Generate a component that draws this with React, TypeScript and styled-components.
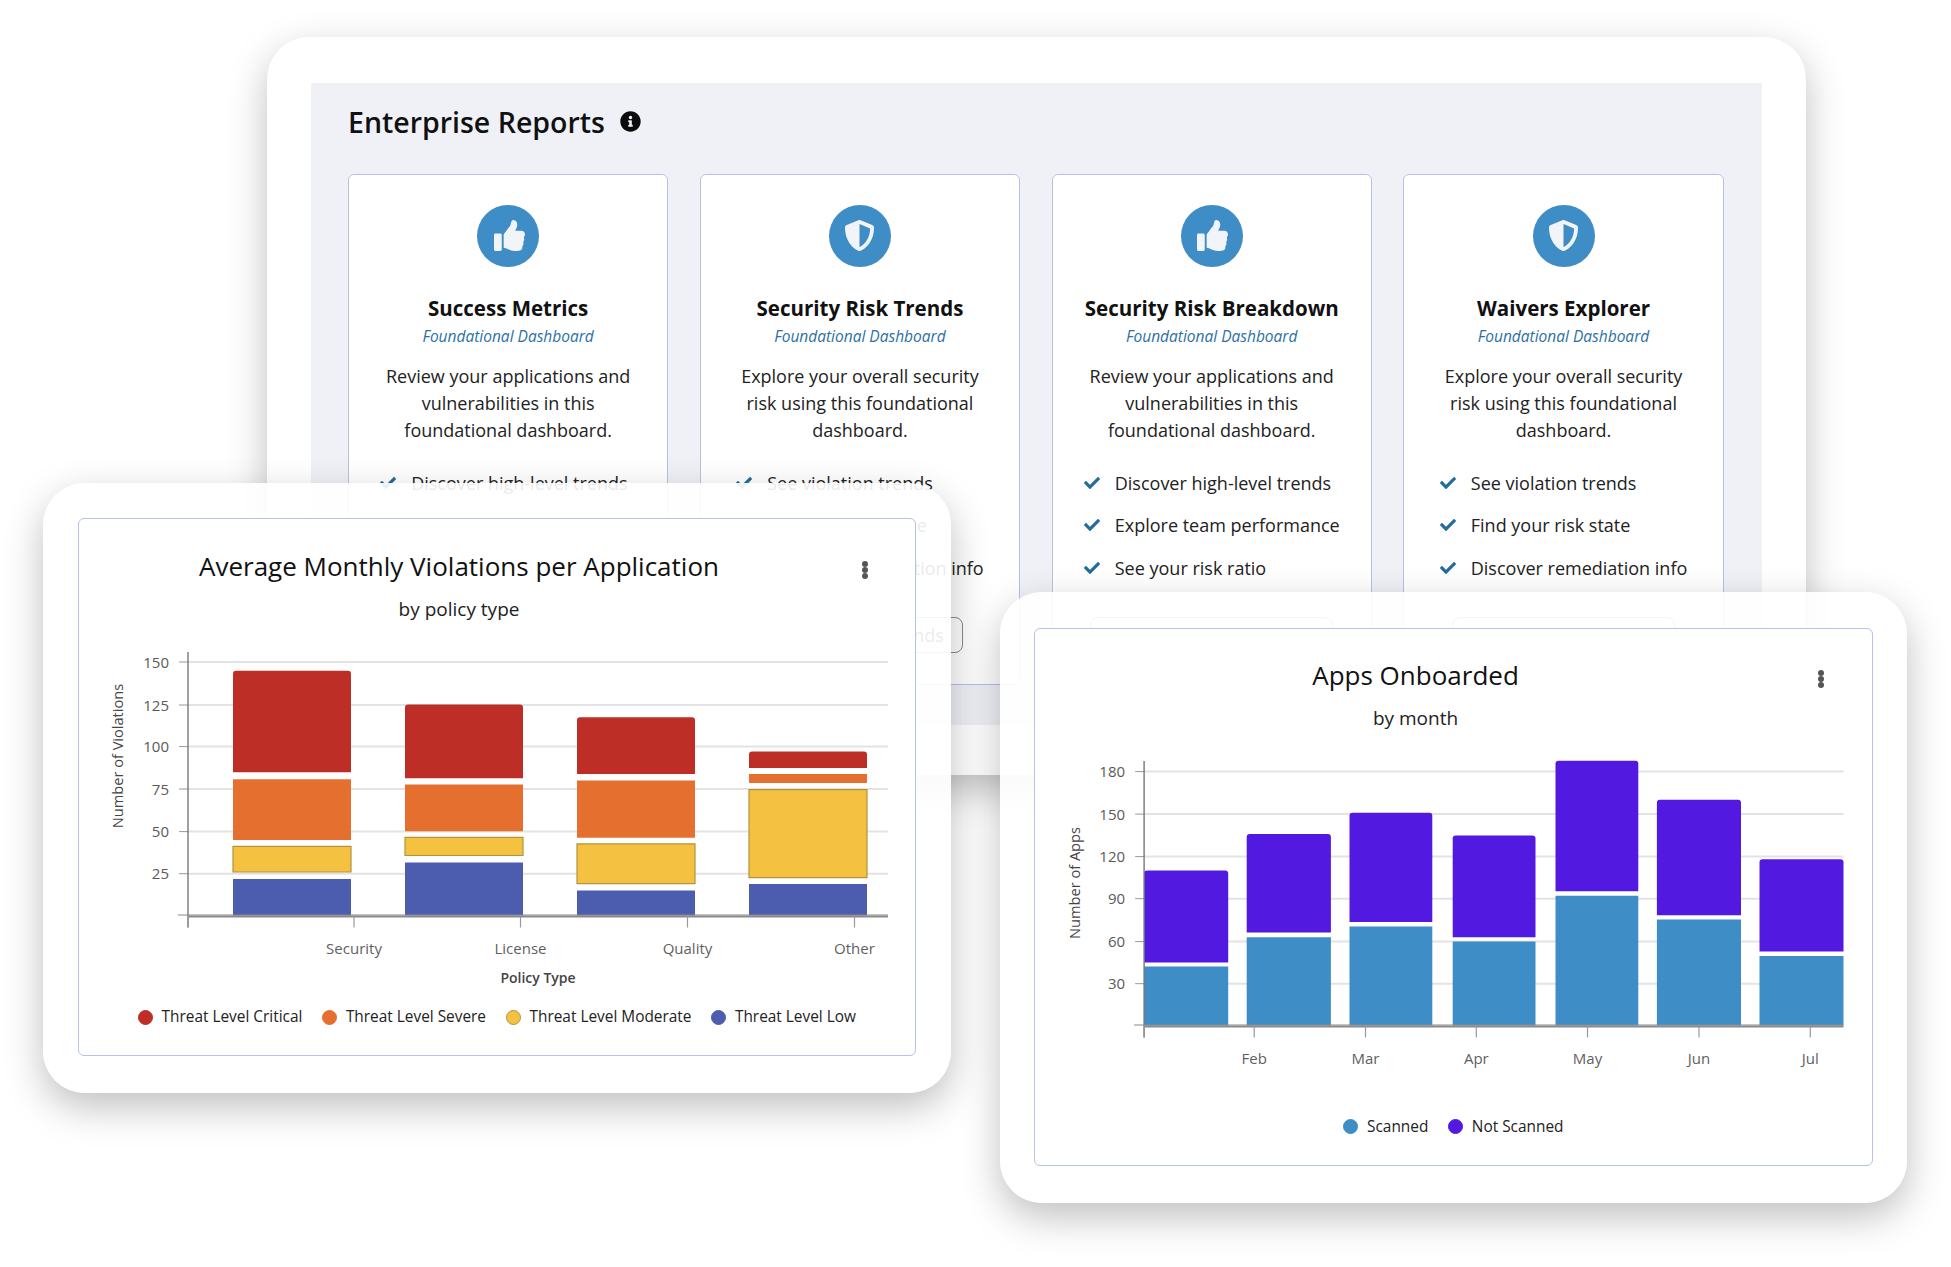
import React from 'react'
import styled, { createGlobalStyle } from 'styled-components'
import { FaShieldAlt, FaCheck, FaInfoCircle } from 'react-icons/fa'

const GlobalStyle = createGlobalStyle`
    html, body {
        margin: 0;
        background: #fff;
    }
    body {
        font-family: "Open Sans", "Liberation Sans", sans-serif;
        color: #1c1c1c;
    }
`

const Stage = styled.div`
    position: relative;
    width: 1951px;
    height: 1267px;
    padding: 37px 0 0 267px;
    box-sizing: border-box;
    overflow: hidden;
`
const Tablet = styled.div`
    width: 1539px;
    height: 738px;
    padding: 45.5px 44px 50px;
    box-sizing: border-box;
    background: #fff;
    border-radius: 42px;
    box-shadow: 0 14px 38px rgba(0, 0, 0, 0.25);
`
const Panel = styled.div`
    height: 100%;
    padding: 0 37px;
    box-sizing: border-box;
    background: #f0f1f7;
`
const PanelHeader = styled.div`
    display: flex;
    align-items: center;
    gap: 15.5px;
    height: 91px;
    padding-bottom: 13px;
    box-sizing: border-box;
`
const PanelTitle = styled.h1`
    margin: 0;
    font-size: 28.5px;
    font-weight: 600;
    color: #111;
`
const CardRow = styled.div`
    display: flex;
    gap: 31.5px;
`
const Card = styled.div`
    width: 320.3px;
    height: 511px;
    padding: 30px 30px 0;
    box-sizing: border-box;
    display: flex;
    flex-direction: column;
    align-items: center;
    background: #fff;
    border: 1.5px solid #b8c1e6;
    border-radius: 6px;
`
const IconCircle = styled.div`
    width: 62px;
    height: 62px;
    flex: none;
    display: flex;
    align-items: center;
    justify-content: center;
    border-radius: 50%;
    background: #3f8dc6;
    color: #f1f4f9;
    font-size: 31px;
`
const CardTitle = styled.h2`
    margin: 27.5px 0 0;
    font-size: 20.5px;
    line-height: 28px;
    font-weight: 700;
    color: #111;
    white-space: nowrap;
`
const CardKicker = styled.div`
    margin-top: 1.5px;
    font-size: 15.5px;
    line-height: 24px;
    font-style: italic;
    color: #2c70a6;
`
const CardText = styled.p`
    margin: 15px 0 0;
    font-size: 18px;
    line-height: 27px;
    text-align: center;
    color: #222;
`
const CheckList = styled.ul`
    margin: 27px 0 0;
    padding: 0;
    list-style: none;
    display: flex;
    flex-direction: column;
    gap: 17.3px;
    width: fit-content;
`
const CheckItem = styled.li`
    display: flex;
    align-items: center;
    gap: 15px;
    height: 25px;
    font-size: 18px;
    white-space: nowrap;
    color: #222;
    svg {
        width: 16px;
        height: 16px;
        color: #246c9e;
    }
`
const OutlineButton = styled.div`
    margin-top: 37px;
    height: 36px;
    padding: 0 18px;
    display: flex;
    align-items: center;
    font-size: 18px;
    color: #333;
    white-space: nowrap;
    border: 1.5px solid #8a8a8a;
    border-radius: 8px;
    box-sizing: border-box;
`

const Overlay = styled.div<{ $left: number; $top: number; $height: number }>`
    position: absolute;
    left: ${(p) => p.$left}px;
    top: ${(p) => p.$top}px;
    width: 907.5px;
    height: ${(p) => p.$height}px;
    padding: 35.5px 34.5px 36.5px 34.5px;
    box-sizing: border-box;
    background: rgba(255, 255, 255, 0.9);
    border-radius: 42px;
    box-shadow: 0 14px 38px rgba(0, 0, 0, 0.25);
`
const ChartCard = styled.div`
    height: 100%;
    box-sizing: border-box;
    background: #fff;
    border: 1.5px solid #b8c1e6;
    border-radius: 6px;
    display: flex;
    flex-direction: column;
`
const ChartHeader = styled.div`
    display: grid;
    grid-template-columns: 761px 1fr;
    padding-top: 28.5px;
`
const ChartHeading = styled.div`
    text-align: center;
`
const ChartTitle = styled.h3`
    margin: 0;
    font-size: 26px;
    line-height: 36px;
    font-weight: 400;
    color: #111;
`
const ChartSub = styled.div`
    margin-top: 12px;
    font-size: 19px;
    line-height: 26px;
    color: #222;
`
const MenuDots = styled.svg`
    margin: 13px 0 0 22px;
    width: 6px;
    height: 18px;
`
const ChartFrame = styled.svg`
    display: block;
    margin-top: 10px;
    flex: none;
`
const Legend = styled.div`
    display: flex;
    justify-content: center;
    gap: 19.5px;
    margin-top: 8.5px;
`
const LegendItem = styled.div`
    display: flex;
    align-items: center;
    gap: 9px;
    font-size: 15.4px;
    line-height: 24px;
    color: #222;
`
const LegendDot = styled.span<{ $color: string; $edge?: string }>`
    width: 15px;
    height: 15px;
    border-radius: 50%;
    box-sizing: border-box;
    background: ${(p) => p.$color};
    border: 1px solid ${(p) => p.$edge || p.$color};
`

// solid thumb, the icon package version has a hole in the cuff
const ThumbIcon = () => (
    <svg width="31" height="31" viewBox="0 0 512 512" fill="currentColor" style={{ marginLeft: 2 }}>
        <path d="M104 224H24c-13.255 0-24 10.745-24 24v240c0 13.255 10.745 24 24 24h80c13.255 0 24-10.745 24-24V248c0-13.255-10.745-24-24-24zM384 81.452c0 42.416-25.97 66.208-33.277 94.548h101.723c33.397 0 59.397 27.746 59.553 58.098.084 17.938-7.546 37.249-19.439 49.197l-.11.11c9.836 23.337 8.237 56.037-9.308 79.469 8.681 25.895-.069 57.704-16.382 74.757 4.298 17.598 2.244 32.575-6.148 44.632C440.202 511.587 389.616 512 346.839 512l-2.845-.001c-48.287-.017-87.806-17.598-119.56-31.725-15.957-7.099-36.821-15.887-52.651-16.178-6.54-.12-11.783-5.457-11.783-11.998v-213.77c0-3.2 1.282-6.271 3.558-8.521 39.614-39.144 56.648-80.587 89.117-113.111 14.804-14.832 20.188-37.236 25.393-58.902C282.515 39.293 291.817 0 312 0c24 0 72 8 72 81.452z" />
    </svg>
)

const reports = [
    {
        icon: <ThumbIcon />,
        title: 'Success Metrics',
        text: 'Review your applications and vulnerabilities in this foundational dashboard.',
        items: ['Discover high-level trends', 'Explore team performance', 'See your risk ratio'],
        action: 'Success Metrics',
    },
    {
        icon: <FaShieldAlt />,
        title: 'Security Risk Trends',
        text: 'Explore your overall security risk using this foundational dashboard.',
        items: ['See violation trends', 'Find your risk state', 'Discover remediation info'],
        action: 'Security Risk Trends',
    },
    {
        icon: <ThumbIcon />,
        title: 'Security Risk Breakdown',
        text: 'Review your applications and vulnerabilities in this foundational dashboard.',
        items: ['Discover high-level trends', 'Explore team performance', 'See your risk ratio'],
        action: 'Security Risk Breakdown',
    },
    {
        icon: <FaShieldAlt />,
        title: 'Waivers Explorer',
        text: 'Explore your overall security risk using this foundational dashboard.',
        items: ['See violation trends', 'Find your risk state', 'Discover remediation info'],
        action: 'View Waivers Explorer',
    },
]

type Seg = { top: number; bottom: number; color: string; edge?: string; round?: boolean }
type Bar = { x0: number; x1: number; segs: Seg[] }
type ChartProps = {
    x: number
    y: number
    width: number
    height: number
    axisX: number
    axisTop: number
    gridEnd: number
    baseY: number
    yTicks: [string, number][]
    xTicks: [string, number][]
    yTitle: string
    yTitleX: number
    yTitleY: number
    xTitle?: string
    bars: Bar[]
}

const RED = '#bd2f26'
const ORANGE = '#e56f2e'
const YELLOW = '#f4c141'
const YEDGE = '#b3933f'
const INDIGO = '#4c5caf'
const BLUE = '#3f8dc6'
const PURPLE = '#521ae0'

const stack = (x0: number, x1: number, r: number[], o: number[], y: number[], b: number) => ({
    x0,
    x1,
    segs: [
        { top: r[0], bottom: r[1], color: RED, round: true },
        { top: o[0], bottom: o[1], color: ORANGE },
        { top: y[0], bottom: y[1], color: YELLOW, edge: YEDGE },
        { top: b, bottom: 915.5, color: INDIGO },
    ],
})
const pair = (x0: number, x1: number, top: number, split: number, blue: number) => ({
    x0,
    x1,
    segs: [
        { top, bottom: split, color: PURPLE, round: true },
        { top: blue, bottom: 1025.5, color: BLUE },
    ],
})

const violationBars: Bar[] = [
    stack(233, 351, [670.8, 772.2], [779.2, 839.9], [846.4, 872], 878.9),
    stack(405, 523, [704.6, 778.3], [784.4, 831.2], [837.3, 855.5], 862.4),
    stack(577, 695, [717.2, 774], [780.5, 837.7], [843.8, 883.7], 890.6),
    stack(749, 867, [751.4, 767.9], [774, 783], [789.6, 877.6], 884.1),
]
const appBars: Bar[] = [
    pair(1144.6, 1228.7, 870.5, 962.4, 966.4),
    pair(1247.2, 1331.4, 834.1, 932.5, 937.3),
    pair(1350, 1432.8, 812.8, 922.1, 926.5),
    pair(1453.2, 1536, 835.4, 937.3, 941.6),
    pair(1556, 1638.8, 760.8, 891.3, 895.7),
    pair(1657.4, 1741.5, 799.8, 915.2, 919.5),
    pair(1760, 1844, 859.2, 951.6, 955.9),
]

function segPath(x0: number, x1: number, s: Seg) {
    if (!s.round) return `M${x0} ${s.top}H${x1}V${s.bottom}H${x0}Z`
    return `M${x0} ${s.bottom}V${s.top + 3}Q${x0} ${s.top} ${x0 + 3} ${s.top}H${x1 - 3}Q${x1} ${s.top} ${x1} ${s.top + 3}V${s.bottom}Z`
}

// everything here is in page coordinates, the viewBox maps them back into the card
function StackedChart(c: ChartProps) {
    return (
        <ChartFrame width={c.width} height={c.height} viewBox={`${c.x} ${c.y} ${c.width} ${c.height}`}>
            {c.yTicks.map(([label, y]) => (
                <g key={label}>
                    <line x1={c.axisX - 9} x2={c.axisX} y1={y} y2={y} stroke="#999" strokeWidth="1" />
                    <line x1={c.axisX} x2={c.gridEnd} y1={y} y2={y} stroke="#e3e3e6" strokeWidth="2" />
                    <text x={c.axisX - 19} y={y + 5.5} textAnchor="end" fontSize="15" fill="#5a5a5a">
                        {label}
                    </text>
                </g>
            ))}
            {c.bars.map((b) =>
                b.segs.map((s) => (
                    <path
                        key={`${b.x0}-${s.top}`}
                        d={segPath(b.x0, b.x1, s)}
                        fill={s.color}
                        stroke={s.edge || 'none'}
                        strokeWidth={s.edge ? 1.2 : 0}
                    />
                ))
            )}
            <line x1={c.axisX} x2={c.axisX} y1={c.axisTop} y2={c.baseY + 12} stroke="#777" strokeWidth="1.4" />
            <line x1={c.axisX - 10} x2={c.gridEnd} y1={c.baseY - 0.5} y2={c.baseY - 0.5} stroke="#8a8a8a" strokeWidth="1" />
            <line x1={c.axisX} x2={c.gridEnd} y1={c.baseY + 1} y2={c.baseY + 1} stroke="#8a8a8a" strokeWidth="2" />
            {c.xTicks.map(([label, x]) => (
                <g key={x}>
                    <line x1={x} x2={x} y1={c.baseY} y2={c.baseY + 12} stroke="#999" strokeWidth="1.2" />
                    <text x={x} y={c.baseY + 38} textAnchor="middle" fontSize="15" fill="#5f5f5f">
                        {label}
                    </text>
                </g>
            ))}
            <text
                transform={`translate(${c.yTitleX} ${c.yTitleY}) rotate(-90)`}
                textAnchor="middle"
                fontSize="14.6"
                fontWeight="500"
                fill="#444"
            >
                {c.yTitle}
            </text>
            {c.xTitle && (
                <text x="538" y="983" textAnchor="middle" fontSize="14" fontWeight="600" fill="#444">
                    {c.xTitle}
                </text>
            )}
        </ChartFrame>
    )
}

const Menu = () => (
    <MenuDots viewBox="0 0 6 18">
        <circle cx="3" cy="3" r="3" fill="#555" />
        <circle cx="3" cy="9" r="3" fill="#555" />
        <circle cx="3" cy="15" r="3" fill="#555" />
    </MenuDots>
)

function App() {
    return (
        <Stage>
            <GlobalStyle />
            <Tablet>
                <Panel>
                    <PanelHeader>
                        <PanelTitle>Enterprise Reports</PanelTitle>
                        <FaInfoCircle size={21} color="#0b0b0b" />
                    </PanelHeader>
                    <CardRow>
                        {reports.map((r) => (
                            <Card key={r.title}>
                                <IconCircle>{r.icon}</IconCircle>
                                <CardTitle>{r.title}</CardTitle>
                                <CardKicker>Foundational Dashboard</CardKicker>
                                <CardText>{r.text}</CardText>
                                <CheckList>
                                    {r.items.map((item) => (
                                        <CheckItem key={item}>
                                            <FaCheck />
                                            {item}
                                        </CheckItem>
                                    ))}
                                </CheckList>
                                <OutlineButton>{r.action}</OutlineButton>
                            </Card>
                        ))}
                    </CardRow>
                </Panel>
            </Tablet>

            <Overlay $left={43} $top={482.5} $height={610}>
                <ChartCard>
                    <ChartHeader>
                        <ChartHeading>
                            <ChartTitle>Average Monthly Violations per Application</ChartTitle>
                            <ChartSub>by policy type</ChartSub>
                        </ChartHeading>
                        <Menu />
                    </ChartHeader>
                    <StackedChart
                        x={79}
                        y={632}
                        width={835}
                        height={365}
                        axisX={188}
                        axisTop={652}
                        gridEnd={888}
                        baseY={915.5}
                        yTicks={[['150', 662], ['125', 705], ['100', 746.6], ['75', 789], ['50', 831.6], ['25', 873.7]]}
                        xTicks={[['', 188], ['Security', 354], ['License', 520.5], ['Quality', 687.5], ['Other', 854.5]]}
                        yTitle="Number of Violations"
                        yTitleX={123}
                        yTitleY={756}
                        xTitle="Policy Type"
                        bars={violationBars}
                    />
                    <Legend>
                        <LegendItem><LegendDot $color={RED} />Threat Level Critical</LegendItem>
                        <LegendItem><LegendDot $color={ORANGE} />Threat Level Severe</LegendItem>
                        <LegendItem><LegendDot $color={YELLOW} $edge={YEDGE} />Threat Level Moderate</LegendItem>
                        <LegendItem><LegendDot $color={INDIGO} />Threat Level Low</LegendItem>
                    </Legend>
                </ChartCard>
            </Overlay>

            <Overlay $left={999.5} $top={592} $height={610.5}>
                <ChartCard>
                    <ChartHeader>
                        <ChartHeading>
                            <ChartTitle>Apps Onboarded</ChartTitle>
                            <ChartSub>by month</ChartSub>
                        </ChartHeading>
                        <Menu />
                    </ChartHeader>
                    <StackedChart
                        x={1035.5}
                        y={741}
                        width={835}
                        height={365}
                        axisX={1144.6}
                        axisTop={761}
                        gridEnd={1844}
                        baseY={1025.5}
                        yTicks={[['180', 771.6], ['150', 814.1], ['120', 856.6], ['90', 898.7], ['60', 941.6], ['30', 983.7]]}
                        xTicks={[['', 1144.6], ['Feb', 1254.7], ['Mar', 1366], ['Apr', 1476.8], ['May', 1588], ['Jun', 1699.5], ['Jul', 1810.8]]}
                        yTitle="Number of Apps"
                        yTitleX={1080}
                        yTitleY={883}
                        bars={appBars}
                    />
                    <Legend>
                        <LegendItem><LegendDot $color={BLUE} />Scanned</LegendItem>
                        <LegendItem><LegendDot $color={PURPLE} />Not Scanned</LegendItem>
                    </Legend>
                </ChartCard>
            </Overlay>
        </Stage>
    )
}

export default App
